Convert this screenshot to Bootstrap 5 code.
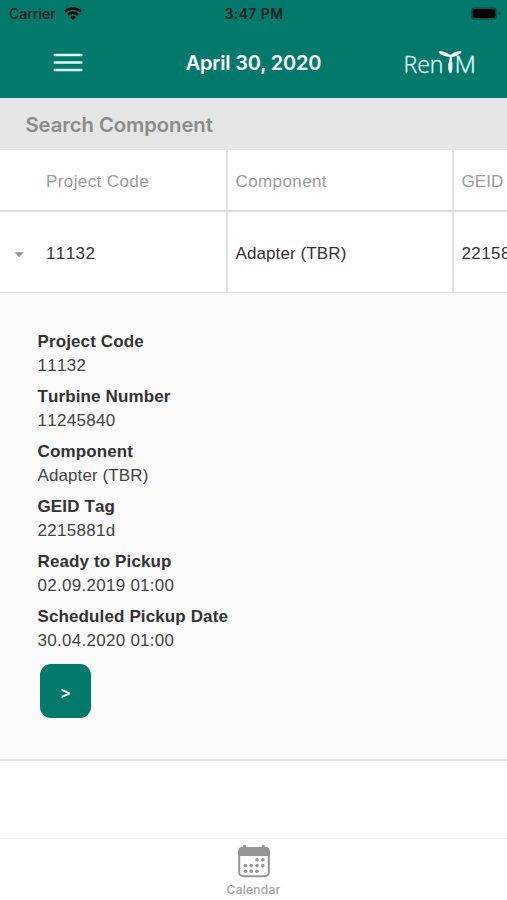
<!DOCTYPE html>
<html lang="en">
<head>
<meta charset="utf-8">
<meta name="viewport" content="width=device-width, initial-scale=1">
<title>RenTM</title>
<link rel="stylesheet" href="https://cdn.jsdelivr.net/npm/bootstrap@5.3.0/dist/css/bootstrap.min.css">
<style>
body{font-family:"Liberation Sans",Arial,sans-serif;font-size:17px;color:#333;line-height:1.2;font-kerning:none}
.app{height:900px}
.top{background:#027a6b;height:98px}
.status{height:27px;font:500 14px/27px Inter,sans-serif;color:#06201d}
.status-side{width:120px}
.status-side span{padding-left:1px}
.clock{letter-spacing:.4px;padding-left:1px}
.title-row{height:71px}
.title{font:600 20px/24px Inter,sans-serif;letter-spacing:-.2px;white-space:nowrap}
.side-l,.side-r{width:103px}
.side-l{padding-right:20px}
.search{height:52px;background:#e5e5e5;color:#8b8b8b;font:600 20.3px/53px Inter,sans-serif;letter-spacing:-.08px;padding-left:25.5px}
.grid-row{display:grid;grid-template-columns:228px 226px 226px}
.grid-row>div{border-right:2px solid #e2e2e2;padding-left:7.5px;letter-spacing:.4px;white-space:nowrap}
.grid-row>.first{padding-left:0}
.head{height:62px;border-bottom:2px solid #dcdcdc;color:#9c9c9c}
.head>div{padding-top:4px}
.rec{height:81px;border-bottom:1px solid #ddd}
.rec>div{padding-top:4px}
.mark-col{width:46px;padding-left:14px}
.detail{height:468px;background:#fafafa;border-bottom:2px solid #e5e5e5;padding:36px 38px 0 37.5px}
.detail dt{font-weight:700;line-height:25px;letter-spacing:.12px}
.detail dd{line-height:24px;margin-bottom:6px;letter-spacing:.28px;color:#444}
.grid-row>.snug,.detail .snug{letter-spacing:.1px}
.go{width:51px;height:54px;border-radius:11px;background:#027a6b;color:#fff;margin:5px 0 0 2.5px;font:600 17px/57px Inter,sans-serif}
.go:hover{background:#02695c;color:#fff}
.tabs{height:62px;border-top:1px solid #eee;color:#a2a2a2;font:500 12px/15px Inter,sans-serif;letter-spacing:.25px}
.tabs span{padding-top:1px}
</style>
<script src="https://cdn.jsdelivr.net/npm/bootstrap@5.3.0/dist/js/bootstrap.bundle.min.js"></script>
</head>
<body>
<div class="app d-flex flex-column overflow-hidden bg-white">
  <header class="top">
    <div class="status d-flex justify-content-between">
      <div class="status-side d-flex align-items-center ps-2"><span>Carrier</span>
        <svg class="ms-2" width="18" height="14" viewBox="0 0 18 14" fill="none" stroke="#000" stroke-width="2.5"><path d="M.9 4.700a11.6 11.6 0 0 1 16.2 0M3.9 7.800a7.3 7.3 0 0 1 10.2 0"/><path d="M9 12.900 6.2 10.100a4 4 0 0 1 5.6 0z" fill="#000" stroke="none"/></svg>
      </div>
      <div class="clock fw-semibold">3:47 PM</div>
      <div class="status-side d-flex align-items-center justify-content-end pe-1">
        <svg width="32" height="14" viewBox="0 0 32 14"><rect x="0" y=".3" width="26" height="12.4" rx="3.6" fill="#02594e"/><rect x="1.700" y="2" width="22.6" height="9" rx="2" fill="#000"/><path d="M27.700 4.500v4q2-.6 2-2t-2-2" fill="#02594e"/></svg>
      </div>
    </div>
    <div class="title-row d-flex align-items-center justify-content-between text-white">
      <div class="side-l d-flex justify-content-end">
        <svg width="30" height="20" viewBox="0 0 30 20" stroke="#e0fff8" stroke-width="2.5" stroke-linecap="round"><path d="M1.700 1.900h26.700M1.700 9.400h26.700M1.700 16.900h26.700"/></svg>
      </div>
      <div class="title">April 30, 2020</div>
      <div class="side-r">
        <svg width="76" height="34" viewBox="0 0 76 34" fill="#e2fff8" stroke="#e2fff8" stroke-width=".35" font-family="Open Sans, sans-serif" font-weight="300" font-size="23"><text x="-.5" y="26.500" textLength="40" lengthAdjust="spacingAndGlyphs">Ren</text><text x="50.5" y="26.500" textLength="21.500" lengthAdjust="spacingAndGlyphs">M</text><path d="M45.900 11.100Q39 10.500 35.200 7.300q-1.500-2 .9-2.200Q42 5.700 46.400 9.100 50.500 5.500 56.200 5q2 .2.900 2-4.100 3.300-9.400 4.200l.7 7v5l-1.200 4h-1.700l-1.200-4v-5z" fill="#fff" stroke="none"/></svg>
      </div>
    </div>
  </header>
  <div class="search">Search Component</div>
  <div class="grid-row head">
    <div class="first d-flex align-items-center"><span class="mark-col"></span>Project Code</div>
    <div class="d-flex align-items-center">Component</div>
    <div class="snug d-flex align-items-center">GEID</div>
  </div>
  <div class="grid-row rec">
    <div class="first d-flex align-items-center"><span class="mark-col d-flex"><svg width="10" height="8" viewBox="0 0 10 8"><path d="M.5 2.300h9L5 7.300z" fill="#929292"/></svg></span>11132</div>
    <div class="snug d-flex align-items-center">Adapter (TBR)</div>
    <div class="d-flex align-items-center">22158</div>
  </div>
  <section class="detail">
    <dl class="m-0">
      <dt>Project Code</dt><dd>11132</dd>
      <dt>Turbine Number</dt><dd>11245840</dd>
      <dt>Component</dt><dd class="snug">Adapter (TBR)</dd>
      <dt>GEID Tag</dt><dd>2215881d</dd>
      <dt>Ready to Pickup</dt><dd>02.09.2019 01:00</dd>
      <dt>Scheduled Pickup Date</dt><dd>30.04.2020 01:00</dd>
    </dl>
    <button class="btn go p-0 border-0" type="button">&gt;</button>
  </section>
  <nav class="tabs mt-auto d-flex flex-column align-items-center">
    <svg class="mt-1" width="34" height="38" viewBox="0 0 34 38" fill="#959595"><rect x="2.200" y="5.200" width="29.600" height="28" rx="4" fill="none" stroke="#959595" stroke-width="2"/><path d="M1.200 13V8q0-4 4-4h1V2.500q1.500-1.500 3 0V4h15.600V2.500q1.500-1.500 3 0V4h1q4 0 4 4v5z"/><g><circle cx="20" cy="16.800" r="1.800"/><circle cx="25.800" cy="16.800" r="1.800"/><circle cx="8.400" cy="22.600" r="1.800"/><circle cx="14.200" cy="22.600" r="1.800"/><circle cx="20" cy="22.600" r="1.800"/><circle cx="25.800" cy="22.600" r="1.800"/><circle cx="8.400" cy="28.200" r="1.800"/><circle cx="14.200" cy="28.200" r="1.800"/><circle cx="20" cy="28.200" r="1.800"/></g></svg>
    <span>Calendar</span>
  </nav>
</div>
</body>
</html>
